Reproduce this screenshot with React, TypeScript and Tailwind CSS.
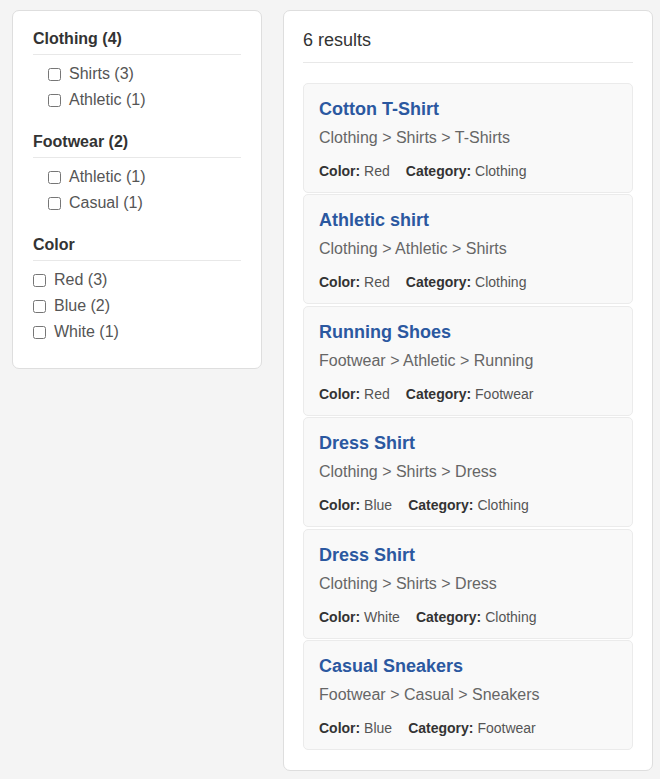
import React from 'react';

type Facet = { label: string; count: number };
type Group = { title: string; items: Facet[]; nested: boolean };

const groups: Group[] = [
  { title: 'Clothing (4)', nested: true, items: [{ label: 'Shirts', count: 3 }, { label: 'Athletic', count: 1 }] },
  { title: 'Footwear (2)', nested: true, items: [{ label: 'Athletic', count: 1 }, { label: 'Casual', count: 1 }] },
  { title: 'Color', nested: false, items: [{ label: 'Red', count: 3 }, { label: 'Blue', count: 2 }, { label: 'White', count: 1 }] },
];

const products = [
  { name: 'Cotton T-Shirt', path: 'Clothing > Shirts > T-Shirts', color: 'Red', category: 'Clothing' },
  { name: 'Athletic shirt', path: 'Clothing > Athletic > Shirts', color: 'Red', category: 'Clothing' },
  { name: 'Running Shoes', path: 'Footwear > Athletic > Running', color: 'Red', category: 'Footwear' },
  { name: 'Dress Shirt', path: 'Clothing > Shirts > Dress', color: 'Blue', category: 'Clothing' },
  { name: 'Dress Shirt', path: 'Clothing > Shirts > Dress', color: 'White', category: 'Clothing' },
  { name: 'Casual Sneakers', path: 'Footwear > Casual > Sneakers', color: 'Blue', category: 'Footwear' },
];

function FacetGroup({ group }: { group: Group }) {
  return (
    <div>
      <h3 className="text-[16px] font-bold leading-[20px] text-[#333] pb-[5px] border-b border-[#e8e8e8]">{group.title}</h3>
      <ul className={`mt-[6px] ${group.nested ? 'pl-[15px]' : ''}`}>
        {group.items.map((item, i) => (
          <li key={i} className="flex items-center h-[26px]">
            <input
              type="checkbox"
              className="m-0 w-[13px] h-[13px] mr-[8px] mt-[1px]"
            />
            <span className="text-[16px] text-[#555]">
              {item.label} ({item.count})
            </span>
          </li>
        ))}
      </ul>
    </div>
  );
}

export default function App() {
  return (
    <div className="min-h-[779px] bg-[#f4f4f4] pl-[12px] pt-[10px] font-['Liberation_Sans',Arial,sans-serif]">
      <div className="flex items-start gap-[21px]">
        {/* Filters */}
        <aside className="w-[250px] bg-white border border-[#dedede] rounded-[7px] px-[20px] pt-[18px] pb-[23px] flex flex-col gap-[19px]">
          {groups.map((g, i) => (
            <FacetGroup key={i} group={g} />
          ))}
        </aside>

        {/* Results */}
        <main className="w-[370px] bg-white border border-[#dedede] rounded-[7px] px-[19px] pt-[19px] pb-[20px]">
          <h2 className="text-[18px] leading-[21px] text-[#333] pb-[11px] border-b border-[#e8e8e8]">6 results</h2>
          <div className="mt-[20px] flex flex-col gap-[1.4px]">
            {products.map((p, i) => (
              <div key={i} className="h-[110px] bg-[#f9f9f9] border border-[#ebebeb] rounded-[5px] px-[15px] pt-[14px]">
                <div className="text-[18px] leading-[22px] font-bold text-[#2b58a0]">{p.name}</div>
                <div className="mt-[6px] text-[16px] leading-[24px] text-[#666]">{p.path}</div>
                <div className="mt-[11px] flex gap-4 text-[14px] leading-[20px] text-[#555]">
                  <span>
                    <b className="text-[#333]">Color:</b> {p.color}
                  </span>
                  <span>
                    <b className="text-[#333]">Category:</b> {p.category}
                  </span>
                </div>
              </div>
            ))}
          </div>
        </main>
      </div>
    </div>
  );
}
